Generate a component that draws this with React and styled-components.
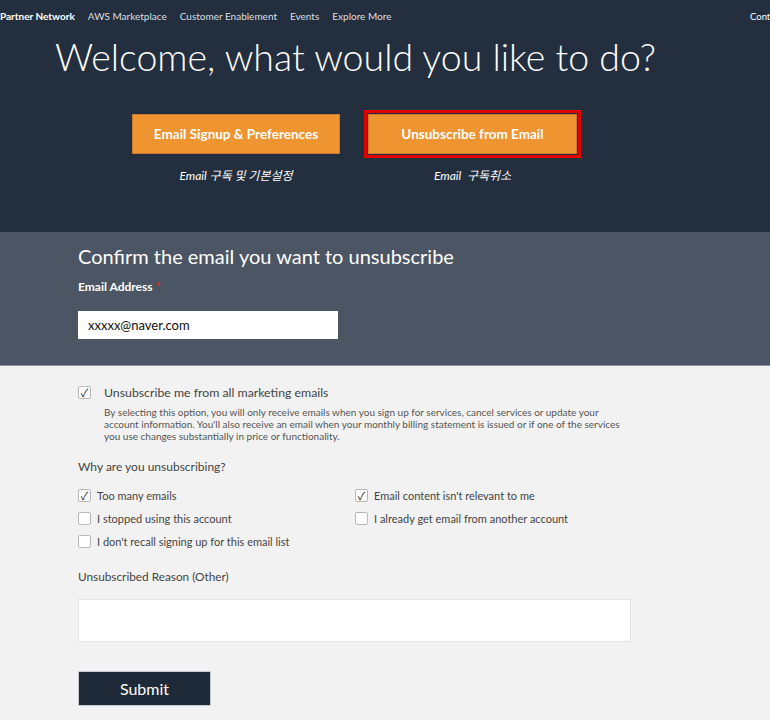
import React from 'react';
import styled, { createGlobalStyle } from 'styled-components';

const GlobalStyle = createGlobalStyle`
  body {
    margin: 0;
    background: #f2f2f2;
    font-family: Lato, "Noto Sans", "Noto Sans CJK KR", sans-serif;
  }
`;

const Hero = styled.div`
  background: #232f3e;
  height: 232px;
  overflow: hidden;
`;

const Nav = styled.nav`
  display: flex;
  align-items: center;
  height: 32px;
  gap: 13px;
  overflow: hidden;
  font-size: 10px;
  white-space: nowrap;
`;

const NavItem = styled.span`
  color: ${p => (p.strong ? '#fff' : '#dcdfe3')};
  font-weight: ${p => (p.strong ? 700 : 400)};
`;

const NavEnd = styled.span`
  margin-left: auto;
  margin-right: -40px;
  color: #fff;
  font-size: 9.5px;
  width: 60px;
`;

const HeroBody = styled.div`
  width: 600px;
  margin-left: 55px;
  display: flex;
  flex-direction: column;
  align-items: center;
`;

const Title = styled.h1`
  margin: 0;
  align-self: flex-start;
  font-weight: 300;
  font-size: 37.5px;
  line-height: 50px;
  color: #fff;
  white-space: nowrap;
`;

const Choices = styled.div`
  display: flex;
  gap: 28px;
  margin-top: 32px;
  margin-left: -1px;
`;

const Choice = styled.div`
  display: flex;
  flex-direction: column;
  align-items: center;
`;

const OrangeButton = styled.button`
  width: ${p => p.w}px;
  height: 40px;
  background: #ee9430;
  border: 1px solid #c9792a;
  color: #fff;
  font-family: inherit;
  font-weight: 700;
  font-size: 13.5px;
  cursor: pointer;
  outline: ${p => (p.selected ? '3px solid #e00000' : 'none')};
  outline-offset: 1px;
`;

const Caption = styled.div`
  margin-top: 12px;
  color: #fff;
  font-style: italic;
  font-size: 12px;
`;

const ConfirmSection = styled.section`
  background: #4c5563;
  height: 134px;
  border-bottom: 1px solid #8c939d;
  padding: 11px 0 0 78px;
  box-sizing: border-box;
`;

const SectionTitle = styled.h2`
  margin: 0;
  font-weight: 400;
  font-size: 20px;
  line-height: 26px;
  color: #fff;
`;

const FieldLabel = styled.div`
  margin-top: 10px;
  font-size: 12px;
  font-weight: 700;
  color: #fff;
`;

const Required = styled.span`
  color: #d13212;
`;

const EmailInput = styled.input`
  display: block;
  margin-top: 17px;
  width: 260px;
  height: 28px;
  box-sizing: border-box;
  border: none;
  padding: 0 10px;
  font-family: inherit;
  font-size: 13px;
  color: #111;
`;

const Form = styled.div`
  padding: 19px 0 20px 78px;
  color: #444;
`;

const Box = styled.span`
  flex-shrink: 0;
  width: 13px;
  height: 13px;
  box-sizing: border-box;
  border: 1px solid #b8b8b8;
  border-radius: 2px;
  background: #fff;
  display: flex;
  align-items: center;
  justify-content: center;
  font-size: 11px;
  line-height: 1;
  color: #222;
`;

const MainOption = styled.label`
  display: flex;
  align-items: center;
  gap: 13px;
  font-size: 12.3px;
  color: #444;
`;

const Note = styled.p`
  margin: 6px 0 0 26px;
  width: 530px;
  font-size: 10px;
  line-height: 12.2px;
  color: #555;
`;

const Question = styled.div`
  margin-top: 16px;
  font-size: 12px;
  color: #444;
`;

const Reasons = styled.div`
  display: grid;
  grid-template-columns: 277px 277px;
  row-gap: 10px;
  margin-top: 15px;
`;

const Reason = styled.label`
  display: flex;
  align-items: center;
  gap: 6px;
  font-size: 11px;
  height: 13px;
  color: #444;
`;

const OtherLabel = styled.div`
  margin-top: 21px;
  font-size: 11.8px;
  color: #444;
`;

const OtherInput = styled.textarea`
  display: block;
  margin-top: 15px;
  width: 553px;
  height: 43px;
  box-sizing: border-box;
  border: 1px solid #e2e2e2;
  background: #fff;
  resize: none;
`;

const Submit = styled.button`
  display: block;
  margin-top: 29px;
  width: 133px;
  height: 35px;
  background: #1f2a38;
  border: 1px solid #c8cbd0;
  color: #fff;
  font-family: inherit;
  font-size: 16px;
  cursor: pointer;
`;

const Check = ({ on }) => <Box>{on ? '✓' : ''}</Box>;

const reasons = [
  ['Too many emails', true],
  ["Email content isn't relevant to me", true],
  ['I stopped using this account', false],
  ['I already get email from another account', false],
  ["I don't recall signing up for this email list", false],
];

export default function App() {
  return (
    <>
      <GlobalStyle />
      <Hero>
        <Nav>
          <NavItem strong>Partner Network</NavItem>
          <NavItem>AWS Marketplace</NavItem>
          <NavItem>Customer Enablement</NavItem>
          <NavItem>Events</NavItem>
          <NavItem>Explore More</NavItem>
          <NavEnd>Contact Us</NavEnd>
        </Nav>
        <HeroBody>
          <Title>Welcome, what would you like to do?</Title>
          <Choices>
            <Choice>
              <OrangeButton w={208}>Email Signup &amp; Preferences</OrangeButton>
              <Caption>Email 구독 및 기본설정</Caption>
            </Choice>
            <Choice>
              <OrangeButton w={209} selected>Unsubscribe from Email</OrangeButton>
              <Caption>Email&nbsp; 구독취소</Caption>
            </Choice>
          </Choices>
        </HeroBody>
      </Hero>
      <ConfirmSection>
        <SectionTitle>Confirm the email you want to unsubscribe</SectionTitle>
        <FieldLabel>
          Email Address <Required>*</Required>
        </FieldLabel>
        <EmailInput defaultValue="xxxxx@naver.com" />
      </ConfirmSection>
      <Form>
        <MainOption>
          <Check on />
          Unsubscribe me from all marketing emails
        </MainOption>
        <Note>
          By selecting this option, you will only receive emails when you sign up for services, cancel services or update your
          account information. You'll also receive an email when your monthly billing statement is issued or if one of the services
          you use changes substantially in price or functionality.
        </Note>
        <Question>Why are you unsubscribing?</Question>
        <Reasons>
          {reasons.map(([text, on]) => (
            <Reason key={text}>
              <Check on={on} />
              {text}
            </Reason>
          ))}
        </Reasons>
        <OtherLabel>Unsubscribed Reason (Other)</OtherLabel>
        <OtherInput />
        <Submit>Submit</Submit>
      </Form>
    </>
  );
}
